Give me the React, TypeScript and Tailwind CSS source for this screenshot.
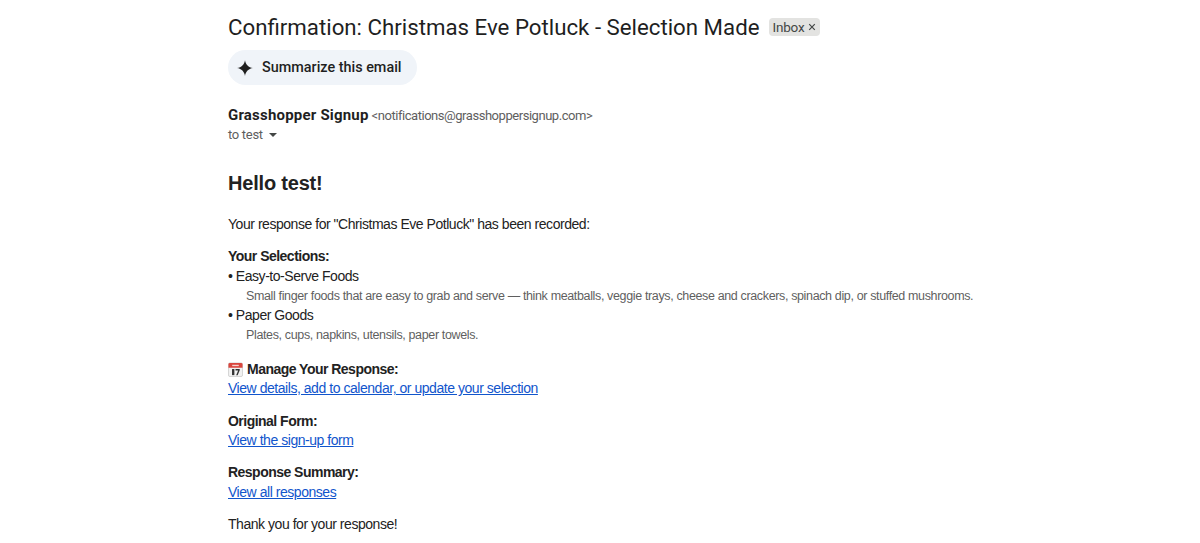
const sans = "font-['Liberation_Sans',Arial,sans-serif]"
const google = "font-['Roboto',sans-serif]"

function Spark() {
  return (
    <svg viewBox="0 0 24 24" className="w-[18px] h-[18px]" fill="#1f1f1f">
      <path d="M12 1.5c.9 5.800 4.700 9.600 10.500 10.500-5.800.9-9.600 4.700-10.500 10.500C11.100 16.700 7.300 12.900 1.500 12 7.300 11.100 11.100 7.300 12 1.500z" />
    </svg>
  )
}

function CalendarIcon() {
  return (
    <svg viewBox="0 0 16 16" className="w-[15px] h-[15px]">
      <rect x="0.5" y="1" width="15" height="14.500" rx="1.500" fill="#f1f1f1" stroke="#b9b9b9" strokeWidth="0.600" />
      <path d="M.5 2.500A1.500 1.500 0 0 1 2 1h12a1.500 1.500 0 0 1 1.500 1.500V6H.5z" fill="#d9463e" />
      <rect x="4.500" y="3" width="7" height="1.400" fill="#f6d5d2" />
      <rect x="4.300" y="7.500" width="2.500" height="6.500" fill="#333" />
      <path d="M8 7.500h4.500v1.300L10.300 14H8.700l2.100-5H8z" fill="#333" />
    </svg>
  )
}

function Link({ children }: { children: string }) {
  return <a href="#" className="block text-[#1155cc] underline">{children}</a>
}

export default function App() {
  return (
    <div className="w-[1200px] h-[543px] overflow-hidden bg-white pl-[228px] text-[#222222]">
      <div className="flex items-center pt-[4px] h-[49px]">
        <h1 className={`${google} text-[22.250px] leading-[30px] text-[#1f1f1f]`}>
          Confirmation: Christmas Eve Potluck - Selection Made
        </h1>
        <span className={`${google} ml-[10px] mt-[1px] flex items-center h-[18px] pl-[3px] pr-[4px] gap-[4px] rounded-[4px] bg-[#e3e3e1] text-[13.500px] tracking-[-0.200px] text-[#444746]`}>
          Inbox
          <svg viewBox="0 0 10 10" className="w-[8px] h-[8px]" stroke="#444746" strokeWidth="1.500">
            <path d="M1.500 1.500l7 7M8.500 1.500l-7 7" />
          </svg>
        </span>
      </div>

      <button className={`${google} mt-[1px] flex items-center w-[189px] h-[35px] pl-[8px] gap-[8px] rounded-full bg-[#f0f4f9] text-[14.400px] font-medium text-[#1f1f1f]`}>
        <Spark />
        Summarize this email
      </button>

      <div className={`${google} mt-[19px] flex items-baseline h-[20px]`}>
        <span className="text-[15px] font-bold tracking-[0.2px] text-[#1f1f1f]">Grasshopper Signup</span>
        <span className="ml-[3px] text-[13px] tracking-[-0.460px] text-[#5e5e5e]">&lt;notifications@grasshoppersignup.com&gt;</span>
      </div>
      <div className={`${google} flex items-center h-[21px] pt-[1px] text-[13px] tracking-[-0.300px] text-[#5e5e5e]`}>
        to test
        <span className="ml-[6px] w-0 h-0 border-x-[4.500px] border-x-transparent border-t-[4.500px] border-t-[#444746]"></span>
      </div>

      <div className={`${sans} text-[14px] tracking-[-0.460px] leading-[19.600px]`}>
        <h2 className="mt-[24px] text-[20px] tracking-[-0.200px] leading-[28px] font-bold">Hello test!</h2>
        <p className="mt-[18px]">Your response for "Christmas Eve Potluck" has been recorded:</p>

        <p className="mt-[12.500px] font-bold tracking-[-0.520px]">Your Selections:</p>
        <p>• Easy-to-Serve Foods</p>
        <p className="pl-[18px] pt-[1px] -mb-[1px] text-[12.500px] tracking-[-0.360px] text-[#5f5f5f]">
          Small finger foods that are easy to grab and serve — think meatballs, veggie trays, cheese and crackers, spinach dip, or stuffed mushrooms.
        </p>
        <p>• Paper Goods</p>
        <p className="pl-[18px] pt-[1px] -mb-[1px] text-[12.500px] tracking-[-0.360px] text-[#5f5f5f]">Plates, cups, napkins, utensils, paper towels.</p>

        <p className="mt-[14.500px] flex items-center gap-[4px] font-bold tracking-[-0.520px]"><CalendarIcon />Manage Your Response:</p>
        <Link>View details, add to calendar, or update your selection</Link>

        <p className="mt-[13px] font-bold tracking-[-0.520px]">Original Form:</p>
        <Link>View the sign-up form</Link>

        <p className="mt-[12.500px] font-bold tracking-[-0.520px]">Response Summary:</p>
        <Link>View all responses</Link>

        <p className="mt-[12.500px]">Thank you for your response!</p>
      </div>
    </div>
  )
}
